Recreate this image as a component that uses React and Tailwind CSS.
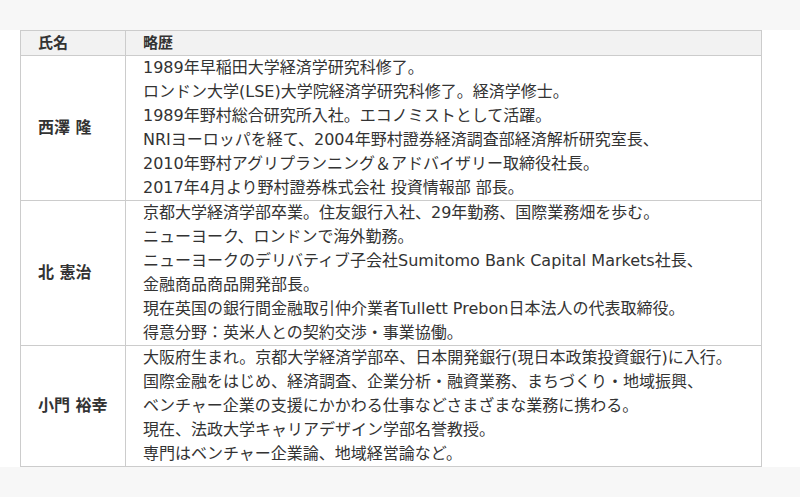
const rows = [
  {
    name: '西澤 隆',
    lines: [
      '1989年早稲田大学経済学研究科修了。',
      'ロンドン大学(LSE)大学院経済学研究科修了。経済学修士。',
      '1989年野村総合研究所入社。エコノミストとして活躍。',
      'NRIヨーロッパを経て、2004年野村證券経済調査部経済解析研究室長、',
      '2010年野村アグリプランニング＆アドバイザリー取締役社長。',
      '2017年4月より野村證券株式会社 投資情報部 部長。',
    ],
  },
  {
    name: '北 憲治',
    lines: [
      '京都大学経済学部卒業。住友銀行入社、29年勤務、国際業務畑を歩む。',
      'ニューヨーク、ロンドンで海外勤務。',
      'ニューヨークのデリバティブ子会社Sumitomo Bank Capital Markets社長、',
      '金融商品商品開発部長。',
      '現在英国の銀行間金融取引仲介業者Tullett Prebon日本法人の代表取締役。',
      '得意分野：英米人との契約交渉・事業協働。',
    ],
  },
  {
    name: '小門 裕幸',
    lines: [
      '大阪府生まれ。京都大学経済学部卒、日本開発銀行(現日本政策投資銀行)に入行。',
      '国際金融をはじめ、経済調査、企業分析・融資業務、まちづくり・地域振興、',
      'ベンチャー企業の支援にかかわる仕事などさまざまな業務に携わる。',
      '現在、法政大学キャリアデザイン学部名誉教授。',
      '専門はベンチャー企業論、地域経営論など。',
    ],
  },
]

export default function App() {
  return (
    <div
      className="min-h-[497px] bg-[#f7f7f7] pt-[30px] text-[#333]"
      style={{ fontFamily: '"DejaVu Sans", "Noto Sans CJK JP", sans-serif' }}
    >
      <div className="bg-white pl-[20px] pr-[38px]">
        <table className="w-full border-collapse">
          <thead>
            <tr className="bg-[#f2f2f2]">
              <th className="w-[105px] border border-[#ccc] px-[17px] py-0 text-left text-[15px] font-bold leading-6">
                氏名
              </th>
              <th className="border border-[#ccc] px-[17px] py-0 text-left text-[15px] font-bold leading-6">
                略歴
              </th>
            </tr>
          </thead>
          <tbody>
            {rows.map((r) => (
              <tr key={r.name}>
                <td className="border border-[#ccc] px-[17px] py-0 align-middle text-[16px] font-bold leading-6 whitespace-nowrap">
                  {r.name}
                </td>
                <td className="border border-[#ccc] px-[17px] py-0 text-[16px] leading-6">
                  {r.lines.map((l) => (
                    <div key={l} className="whitespace-nowrap">{l}</div>
                  ))}
                </td>
              </tr>
            ))}
          </tbody>
        </table>
      </div>
    </div>
  )
}
